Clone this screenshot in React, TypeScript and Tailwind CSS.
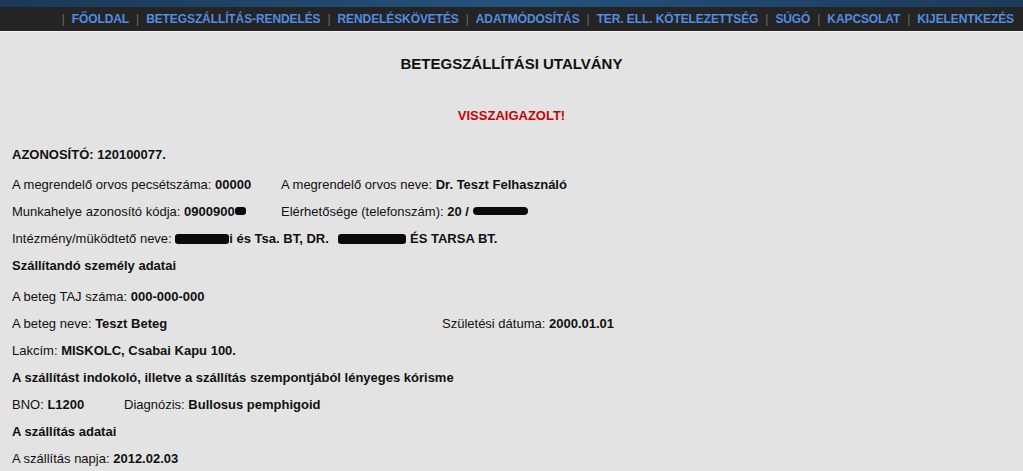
import React from 'react';

const navItems = [
  'FŐOLDAL',
  'BETEGSZÁLLÍTÁS-RENDELÉS',
  'RENDELÉSKÖVETÉS',
  'ADATMÓDOSÍTÁS',
  'TER. ELL. KÖTELEZETTSÉG',
  'SÚGÓ',
  'KAPCSOLAT',
  'KIJELENTKEZÉS',
];

// black marker used to hide personal data in the original
const Redact = ({ className }: { className: string }) => (
  <span className={'inline-block align-middle bg-[#0a0a0a] rounded-[3px] ' + className} />
);

const Row = ({ children, className = '' }: { children: React.ReactNode; className?: string }) => (
  <div className={'flex items-center h-[27px] whitespace-nowrap ' + className}>{children}</div>
);

const Cell = ({ label, value, className = '' }: { label: string; value?: React.ReactNode; className?: string }) => (
  <span className={className}>
    {label} <b>{value}</b>
  </span>
);

export default function App() {
  return (
    <div className="min-h-[471px] bg-[#e3e3e3] text-[#111] font-['Liberation_Sans',Arial,sans-serif]">
      {/* Header */}
      <div className="h-[7px] bg-gradient-to-r from-[#1b3856] via-[#24527c] to-[#1c3b5a]" />
      <div className="h-[24px] bg-[#242424] flex items-center justify-end pr-[9px] text-[12px] font-bold tracking-[-0.1px]">
        {navItems.map(item => (
          <React.Fragment key={item}>
            <span className="px-[7px] text-[#6b6b6b] font-normal">|</span>
            <a href="#" className="text-[#4f8ee2]">{item}</a>
          </React.Fragment>
        ))}
      </div>
      <div className="h-[1px] bg-[#f4f4f4]" />

      {/* Content */}
      <div className="text-[13px]">
        <div className="mt-[22px] h-[20px] leading-[20px] text-center text-[15px] font-bold">
          BETEGSZÁLLÍTÁSI UTALVÁNY
        </div>
        <div className="mt-[32px] h-[20px] leading-[20px] text-center font-bold text-[#cc0000]">
          VISSZAIGAZOLT!
        </div>

        <div className="pl-[12px] mt-[15px]">
          <Row className="font-bold">AZONOSÍTÓ: 120100077.</Row>

          <Row className="mt-[3px]">
            <Cell className="w-[269px]" label="A megrendelő orvos pecsétszáma:" value="00000" />
            <Cell label="A megrendelő orvos neve:" value="Dr. Teszt Felhasználó" />
          </Row>
          <Row>
            <span className="w-[269px]">
              Munkahelye azonosító kódja: <b>0900900</b>
              <Redact className="w-[11px] h-[8px] -mt-[2px]" />
            </span>
            <span>
              Elérhetősége (telefonszám): <b>20 / </b>
              <Redact className="w-[55px] h-[8px] -mt-[2px] rounded-[5px]" />
            </span>
          </Row>
          <Row>
            <span>
              Intézmény/müködtető neve:{' '}
              <Redact className="w-[54px] h-[10px] -mt-[1px]" />
              <b>i és Tsa. BT, DR. </b>
              <Redact className="w-[68px] h-[10px] ml-[6px] -mt-[1px]" />
              <b> ÉS TARSA BT.</b>
            </span>
          </Row>
          <Row className="font-bold">Szállítandó személy adatai</Row>

          <Row className="mt-[4px]">
            <Cell label="A beteg TAJ száma:" value="000-000-000" />
          </Row>
          <Row>
            <Cell className="w-[430px]" label="A beteg neve:" value="Teszt Beteg" />
            <Cell label="Születési dátuma:" value="2000.01.01" />
          </Row>
          <Row>
            <Cell label="Lakcím:" value="MISKOLC, Csabai Kapu 100." />
          </Row>
          <Row className="font-bold">A szállítást indokoló, illetve a szállítás szempontjából lényeges kórisme</Row>
          <Row>
            <Cell className="w-[112px]" label="BNO:" value="L1200" />
            <Cell label="Diagnózis:" value="Bullosus pemphigoid" />
          </Row>
          <Row className="font-bold">A szállítás adatai</Row>
          <Row>
            <Cell label="A szállítás napja:" value="2012.02.03" />
          </Row>
        </div>
      </div>
    </div>
  );
}
